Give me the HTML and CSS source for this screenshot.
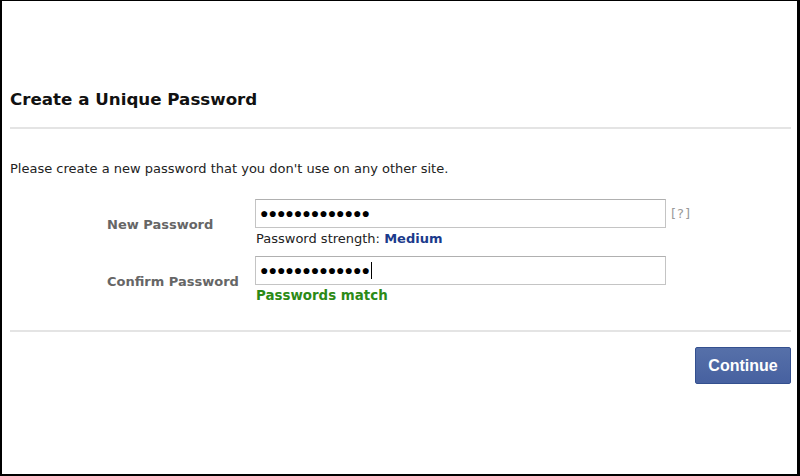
FILE: index.html
```html
<!DOCTYPE html>
<html lang="en">
<head>
  <meta charset="UTF-8">
  <title>Create a Unique Password</title>
  <link rel="stylesheet" href="styles.css">
</head>
<body>
  <div class="frame">
    <h1>Create a Unique Password</h1>
    <div class="divider"></div>
    <p class="intro">Please create a new password that you don't use on any other site.</p>
    <div class="form">
      <div class="label">New Password</div>
      <div class="field-col">
        <div class="field-row">
          <div class="field">●●●●●●●●●●●●●</div>
          <span class="help">[?]</span>
        </div>
        <div class="note">Password strength: <b class="medium">Medium</b></div>
      </div>
      <div class="label">Confirm Password</div>
      <div class="field-col">
        <div class="field-row">
          <div class="field">●●●●●●●●●●●●●<span class="caret"></span></div>
        </div>
        <div class="note match">Passwords match</div>
      </div>
    </div>
    <div class="divider bottom"></div>
    <div class="actions">
      <button type="button">Continue</button>
    </div>
  </div>
</body>
</html>
```

FILE: styles.css
```css
body {
  margin: 0;
  padding: 0;
  background: white;
  font-family: "Liberation Sans", Arial, sans-serif;
  color: #222;
}
.frame {
  width: 800px;
  height: 476px;
  box-sizing: border-box;
  border: 2px solid #000;
  border-top-width: 1px;
  border-right-width: 3px;
  padding: 88px 6px 0 8px;
}
h1 {
  margin: 0 0 18px;
  font-family: "DejaVu Sans", Verdana, sans-serif;
  font-size: 16.7px;
  line-height: 20px;
  font-weight: bold;
  color: #111;
}
.divider {
  height: 2px;
  background: #e4e4e4;
}
.intro {
  margin: 32px 0 0;
  font-family: "DejaVu Sans", Verdana, sans-serif;
  font-size: 13px;
  line-height: 16px;
  color: #222;
}
.form {
  display: grid;
  grid-template-columns: 148px auto;
  row-gap: 9px;
  margin: 22px 0 0 97px;
}
.label {
  padding-top: 18px;
  font-family: "DejaVu Sans", Verdana, sans-serif;
  font-size: 13px;
  line-height: 16px;
  font-weight: bold;
  color: #666;
}
.field-row {
  display: flex;
  align-items: center;
  gap: 5px;
}
.field {
  width: 401px;
  height: 27px;
  border: 1px solid #c4c4c4;
  border-top-color: #b0b0b0;
  padding: 0 4px;
  font-size: 14px;
  line-height: 27px;
  color: #000;
  display: flex;
  align-items: center;
}
.caret {
  display: inline-block;
  width: 1px;
  height: 17px;
  background: #000;
  margin-left: 1px;
}
.help {
  font-family: "DejaVu Sans", Verdana, sans-serif;
  font-size: 13px;
  letter-spacing: 1px;
  color: #9a9a9a;
}
.note {
  margin-top: 3px;
  padding-left: 1px;
  font-family: "DejaVu Sans", Verdana, sans-serif;
  font-size: 13px;
  line-height: 16px;
  color: #222;
}
.medium {
  color: #1b3a8c;
}
.match {
  margin-top: 3px;
  font-size: 13.4px;
  font-weight: bold;
  color: #2c8a16;
}
.bottom {
  margin-top: 26px;
}
.actions {
  display: flex;
  justify-content: flex-end;
  padding-top: 15px;
}
button {
  width: 96px;
  height: 37px;
  background: linear-gradient(#5670a9, #4761a0);
  border: 1px solid #34508f;
  border-radius: 2px;
  color: white;
  font-family: "Liberation Sans", Arial, sans-serif;
  font-size: 16px;
  font-weight: bold;
  cursor: pointer;
}
```
